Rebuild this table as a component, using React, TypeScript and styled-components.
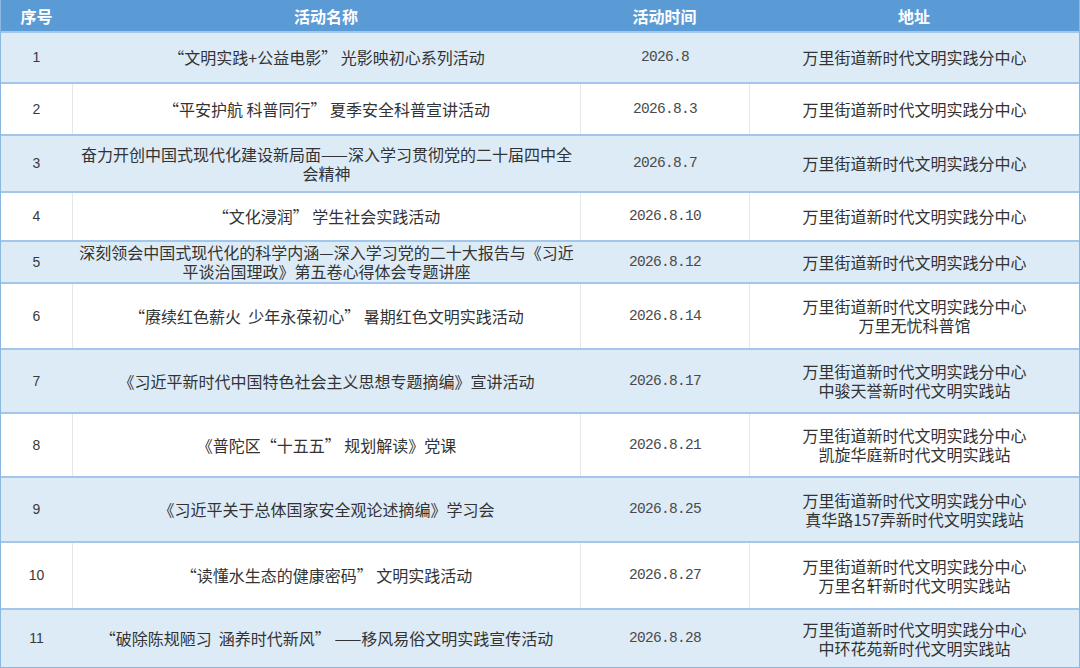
import React from "react";
import styled, { createGlobalStyle } from "styled-components";

const GlobalStyle = createGlobalStyle`
  html, body {
    margin: 0;
    padding: 0;
    background: #ffffff;
  }
  body {
    font-family: "Noto Sans CJK SC", "Noto Sans", sans-serif;
  }
`;

const Table = styled.div`
  width: 1080px;
  box-sizing: border-box;
  border-left: 1px solid #8ab8e2;
  border-right: 1px solid #8ab8e2;
  border-bottom: 2px solid #8ab8e2;
  overflow: hidden;
`;

const Row = styled.div<{ $h: number; $band?: boolean; $head?: boolean }>`
  display: grid;
  grid-template-columns: 71px 508px 169px 1fr;
  height: ${(p) => p.$h}px;
  box-sizing: border-box;
  border-bottom: 2px solid #a3c7ea;
  background: ${(p) => (p.$head ? "#5b9bd5" : p.$band ? "#ddebf7" : "#ffffff")};
  &:last-child {
    border-bottom: none;
  }
`;

const Cell = styled.div<{ $band?: boolean; $first?: boolean }>`
  display: flex;
  align-items: center;
  justify-content: center;
  text-align: center;
  padding: 0 4px;
  border-left: ${(p) =>
    p.$first ? "none" : `1px solid ${p.$band ? "#ddebf7" : "#e4e8ee"}`};
  font-size: 16px;
  line-height: 19px;
  color: #333333;
  overflow: hidden;
  white-space: pre;
`;

const HeadCell = styled.div`
  display: flex;
  align-items: center;
  justify-content: center;
  font-size: 16px;
  font-weight: 700;
  color: #ffffff;
`;

const Num = styled.span`
  font-family: "Liberation Sans", Arial, sans-serif;
  font-size: 14px;
  color: #3a3a3a;
`;

const Date = styled.span`
  font-family: "Liberation Mono", "Courier New", monospace;
  font-size: 14.5px;
  letter-spacing: -0.7px;
  color: #4a4a4a;
`;

type Item = {
  h: number;
  title: string[];
  date: string;
  addr: string[];
};

const MAIN = "万里街道新时代文明实践分中心";

const items: Item[] = [
  { h: 51, title: ["“文明实践+公益电影” 光影映初心系列活动"], date: "2026.8", addr: [MAIN] },
  { h: 52, title: ["“平安护航 科普同行” 夏季安全科普宣讲活动"], date: "2026.8.3", addr: [MAIN] },
  {
    h: 57,
    title: ["奋力开创中国式现代化建设新局面——深入学习贯彻党的二十届四中全", "会精神"],
    date: "2026.8.7",
    addr: [MAIN],
  },
  { h: 49, title: ["“文化浸润” 学生社会实践活动"], date: "2026.8.10", addr: [MAIN] },
  {
    h: 42,
    title: ["深刻领会中国式现代化的科学内涵—深入学习党的二十大报告与《习近", "平谈治国理政》第五卷心得体会专题讲座"],
    date: "2026.8.12",
    addr: [MAIN],
  },
  { h: 66, title: ["“赓续红色薪火  少年永葆初心” 暑期红色文明实践活动"], date: "2026.8.14", addr: [MAIN, "万里无忧科普馆"] },
  { h: 64, title: ["《习近平新时代中国特色社会主义思想专题摘编》宣讲活动"], date: "2026.8.17", addr: [MAIN, "中骏天誉新时代文明实践站"] },
  { h: 64, title: ["《普陀区“十五五” 规划解读》党课"], date: "2026.8.21", addr: [MAIN, "凯旋华庭新时代文明实践站"] },
  { h: 65, title: ["《习近平关于总体国家安全观论述摘编》学习会"], date: "2026.8.25", addr: [MAIN, "真华路157弄新时代文明实践站"] },
  { h: 67, title: ["“读懂水生态的健康密码” 文明实践活动"], date: "2026.8.27", addr: [MAIN, "万里名轩新时代文明实践站"] },
  { h: 57, title: ["“破除陈规陋习  涵养时代新风” ——移风易俗文明实践宣传活动"], date: "2026.8.28", addr: [MAIN, "中环花苑新时代文明实践站"] },
];

const Lines = ({ lines }: { lines: string[] }) => (
  <span>
    {lines.map((l, i) => (
      <React.Fragment key={i}>
        {i > 0 && <br />}
        {l}
      </React.Fragment>
    ))}
  </span>
);

const App = () => {
  return (
    <>
      <GlobalStyle />
      <Table>
        <Row $h={33} $head>
          <HeadCell>序号</HeadCell>
          <HeadCell>活动名称</HeadCell>
          <HeadCell>活动时间</HeadCell>
          <HeadCell>地址</HeadCell>
        </Row>
        {items.map((it, i) => {
          const band = i % 2 === 0;
          return (
            <Row key={i} $h={it.h} $band={band}>
              <Cell $band={band} $first>
                <Num>{i + 1}</Num>
              </Cell>
              <Cell $band={band}>
                <Lines lines={it.title} />
              </Cell>
              <Cell $band={band}>
                <Date>{it.date}</Date>
              </Cell>
              <Cell $band={band}>
                <Lines lines={it.addr} />
              </Cell>
            </Row>
          );
        })}
      </Table>
    </>
  );
};

export default App;
